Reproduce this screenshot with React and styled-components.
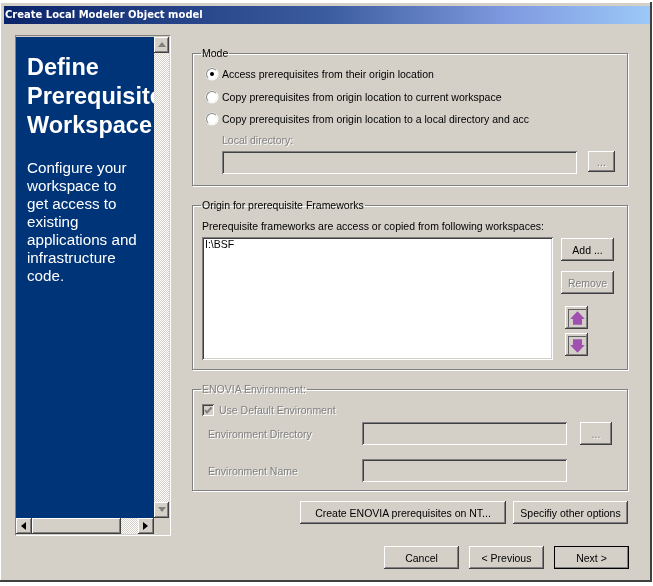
import React from 'react';
import styled, { createGlobalStyle } from 'styled-components';

const GlobalStyle = createGlobalStyle`
    html, body {
        margin: 0;
        padding: 0;
        background: #ffffff;
    }
    body {
        width: 653px;
        height: 586px;
        overflow: hidden;
        font-family: "Liberation Sans", Arial, sans-serif;
    }
`;

const raisedShadow = `
    box-shadow: inset -1px -1px 0 #404040, inset 1px 1px 0 #ffffff,
        inset -2px -2px 0 #808080, inset 2px 2px 0 #d4d0c8;
`;
const sunkenShadow = `
    box-shadow: inset 1px 1px 0 #808080, inset -1px -1px 0 #ffffff,
        inset 2px 2px 0 #404040, inset -2px -2px 0 #d4d0c8;
`;

const Dialog = styled.div`
    box-sizing: border-box;
    width: 652px;
    height: 580px;
    margin-top: 2px;
    padding: 4px 0 0 4px;
    background: #d4d0c8;
    border-right: 2px solid #404040;
    border-bottom: 2px solid #404040;
    box-shadow: inset 1px 1px 0 #ffffff;
    display: flex;
    flex-direction: column;
    filter: blur(0.3px);
`;
const TitleBar = styled.div`
    height: 18px;
    flex: none;
    padding-left: 1px;
    background: linear-gradient(
        90deg,
        #0a246a 0%,
        #3c5ca0 50%,
        #7f9ae0 78%,
        #9cc8f8 100%
    );
    color: #ffffff;
    font: bold 10px/18px "DejaVu Sans", Verdana, sans-serif;
    white-space: nowrap;
`;
const Body = styled.div`
    flex: 1;
    display: flex;
    padding: 11px 22px 0 11px;
    gap: 21px;
`;
const WizardPane = styled.div`
    box-sizing: border-box;
    width: 156px;
    height: 501px;
    flex: none;
    display: grid;
    grid-template-columns: 138px 15px;
    grid-template-rows: 481px 16px;
    padding: 1px 2px 2px 0;
    border: 1px solid #808080;
    border-right-color: #ffffff;
    border-bottom-color: #ffffff;
`;
const BluePanel = styled.div`
    overflow: hidden;
    background: #003478;
    color: #ffffff;
    padding: 16px 0 0 11px;
`;
const PanelTitle = styled.div`
    font-weight: bold;
    font-size: 23.5px;
    line-height: 29px;
    white-space: nowrap;
    margin-bottom: 19px;
`;
const PanelText = styled.div`
    font-size: 15.2px;
    line-height: 18px;
    width: 114px;
`;
const VScroll = styled.div`
    display: flex;
    flex-direction: column;
    justify-content: space-between;
    background: repeating-conic-gradient(#ffffff 0 25%, #d4d0c8 0 50%) 0 0 / 2px 2px;
`;
const HScroll = styled.div`
    display: flex;
    background: repeating-conic-gradient(#ffffff 0 25%, #d4d0c8 0 50%) 0 0 / 2px 2px;
`;
const ScrollBtn = styled.div`
    width: ${(p) => p.$width || 16}px;
    height: 16px;
    flex: none;
    background: #d4d0c8;
    display: flex;
    align-items: center;
    justify-content: center;
    ${raisedShadow}
`;
const ScrollThumb = styled.div`
    width: 89px;
    height: 16px;
    background: #d4d0c8;
    ${raisedShadow}
`;
const ScrollFill = styled.div`
    flex: 1;
`;
const Content = styled.div`
    width: 436px;
    padding-top: 12px;
    display: flex;
    flex-direction: column;
`;
const Group = styled.fieldset`
    box-sizing: border-box;
    height: ${(p) => p.$height}px;
    margin: 0 0 ${(p) => p.$gap || 0}px;
    padding: 0 12px 0 9px;
    min-width: 0;
    border: 1px solid #808080;
    box-shadow: 1px 1px 0 #ffffff, inset 1px 1px 0 #ffffff;
    color: #000000;
    font-size: 10.5px;
`;
const Legend = styled.legend`
    margin-left: -1px;
    padding: 0 1px;
    font-size: 10.5px;
    line-height: 13px;
    color: ${(p) => (p.$disabled ? '#808080' : '#000000')};
    text-shadow: ${(p) => (p.$disabled ? '1px 1px 0 #ffffff' : 'none')};
`;
const RadioList = styled.div`
    margin-top: 3px;
    padding-left: 4px;
`;
const RadioRow = styled.div`
    display: flex;
    align-items: center;
    height: 22.5px;
    gap: 4px;
    white-space: nowrap;
`;
const RadioDot = styled.span`
    box-sizing: border-box;
    width: 12px;
    height: 12px;
    flex: none;
    border-radius: 50%;
    background: #ffffff;
    border: 1px solid #808080;
    border-right-color: #f4f4f4;
    border-bottom-color: #f4f4f4;
    box-shadow: 0 0 0 0.5px #ffffff;
    display: flex;
    align-items: center;
    justify-content: center;
    &::after {
        content: '';
        width: 4px;
        height: 4px;
        border-radius: 50%;
        background: ${(p) => (p.$checked ? '#000000' : 'transparent')};
    }
`;
const DimLabel = styled.div`
    color: #808080;
    text-shadow: 1px 1px 0 #ffffff;
    line-height: 14px;
    white-space: nowrap;
`;
const LocalLabel = styled(DimLabel)`
    margin: 2.5px 0 0 20px;
`;
const LocalRow = styled.div`
    display: flex;
    align-items: flex-start;
    gap: 11px;
    margin: 4px 0 0 20px;
`;
const Field = styled.div`
    box-sizing: border-box;
    width: ${(p) => p.$width}px;
    height: 23px;
    background: #d4d0c8;
    flex: none;
    ${sunkenShadow}
`;
const Button = styled.div`
    box-sizing: border-box;
    width: ${(p) => p.$width}px;
    height: ${(p) => p.$height || 23}px;
    flex: none;
    display: flex;
    align-items: center;
    justify-content: center;
    background: #d4d0c8;
    color: ${(p) => (p.$disabled ? '#808080' : '#000000')};
    text-shadow: ${(p) => (p.$disabled ? '1px 1px 0 #ffffff' : 'none')};
    font-size: 10.5px;
    white-space: nowrap;
    outline: ${(p) => (p.$default ? '1px solid #000000' : 'none')};
    outline-offset: -1px;
    ${raisedShadow}
`;
const FrameworkText = styled.div`
    margin-top: 7px;
    line-height: 14px;
    white-space: nowrap;
`;
const ListRow = styled.div`
    display: flex;
    margin-top: 4px;
`;
const ListBox = styled.div`
    box-sizing: border-box;
    width: 351px;
    height: 123px;
    flex: none;
    background: #ffffff;
    padding: 1px 3px;
    line-height: 13px;
    ${sunkenShadow}
`;
const ListButtons = styled.div`
    display: flex;
    flex-direction: column;
    gap: 10px;
    margin-left: 8px;
    padding-top: 1px;
`;
const ArrowColumn = styled.div`
    display: flex;
    flex-direction: column;
    gap: 4px;
    margin: 2px 0 0 4px;
`;
const ArrowButton = styled(Button)`
    width: 23px;
    height: 23px;
`;
const ArrowIcon = styled.svg`
    width: 17px;
    height: 17px;
    border-top: 1px solid #606060;
    border-left: 1px solid #606060;
`;
const EnvRow = styled.div`
    display: flex;
    align-items: center;
    height: ${(p) => p.$height || 23}px;
    margin-top: ${(p) => p.$top}px;
    color: #808080;
`;
const EnvLabel = styled(DimLabel)`
    width: 160px;
    padding-left: 6px;
    box-sizing: content-box;
    margin-right: -6px;
`;
const CheckBox = styled.span`
    box-sizing: border-box;
    width: 12px;
    height: 12px;
    flex: none;
    margin-right: 5px;
    background: #d4d0c8;
    display: flex;
    ${sunkenShadow}
`;
const EnvBrowse = styled(Button)`
    margin-left: 13px;
`;
const ActionRow = styled.div`
    display: flex;
    justify-content: flex-end;
    gap: 7px;
    margin-top: 10px;
`;
const NavRow = styled.div`
    display: flex;
    justify-content: flex-end;
    gap: 10px;
    margin-top: 22px;
    margin-right: -1px;
`;

const Tri = ({ dir, color = '#000000' }) => {
    const points = {
        up: '4,1 8,6 0,6',
        down: '0,1 8,1 4,6',
        left: '6,0 6,8 1,4',
        right: '1,0 1,8 6,4',
    };
    return (
        <svg width="8" height="8" viewBox="0 0 8 8">
            <polygon points={points[dir]} fill={color} />
        </svg>
    );
};

const BigArrow = ({ down }) => (
    <ArrowIcon viewBox="0 0 15 15">
        <polygon
            points={
                down
                    ? '3.5,2 11.5,2 11.5,7 14,7 7.5,14 1,7 3.5,7'
                    : '7.5,1 14,8 11.5,8 11.5,13 3.5,13 3.5,8 1,8'
            }
            fill="#a050b0"
        />
    </ArrowIcon>
);

const App = () => {
    return (
        <>
            <GlobalStyle />
            <Dialog>
                <TitleBar>Create Local Modeler Object model</TitleBar>
                <Body>
                    <WizardPane>
                        <BluePanel>
                            <PanelTitle>
                                Define
                                <br />
                                Prerequisite
                                <br />
                                Workspace
                            </PanelTitle>
                            <PanelText>
                                Configure your workspace to get access to
                                existing applications and infrastructure code.
                            </PanelText>
                        </BluePanel>
                        <VScroll>
                            <ScrollBtn $width={15}>
                                <Tri dir="up" color="#808080" />
                            </ScrollBtn>
                            <ScrollBtn $width={15}>
                                <Tri dir="down" color="#808080" />
                            </ScrollBtn>
                        </VScroll>
                        <HScroll>
                            <ScrollBtn>
                                <Tri dir="left" />
                            </ScrollBtn>
                            <ScrollThumb />
                            <ScrollFill />
                            <ScrollBtn>
                                <Tri dir="right" />
                            </ScrollBtn>
                        </HScroll>
                    </WizardPane>
                    <Content>
                        <Group $height={139} $gap={13}>
                            <Legend>Mode</Legend>
                            <RadioList>
                                <RadioRow>
                                    <RadioDot $checked />
                                    Access prerequisites from their origin location
                                </RadioRow>
                                <RadioRow>
                                    <RadioDot />
                                    Copy prerequisites from origin location to
                                    current workspace
                                </RadioRow>
                                <RadioRow>
                                    <RadioDot />
                                    Copy prerequisites from origin location to a
                                    local directory and acc
                                </RadioRow>
                            </RadioList>
                            <LocalLabel>Local directory:</LocalLabel>
                            <LocalRow>
                                <Field $width={355} />
                                <Button $width={27} $height={21} $disabled>
                                    ...
                                </Button>
                            </LocalRow>
                        </Group>
                        <Group $height={171} $gap={13}>
                            <Legend>Origin for prerequisite Frameworks</Legend>
                            <FrameworkText>
                                Prerequisite frameworks are access or copied
                                from following workspaces:
                            </FrameworkText>
                            <ListRow>
                                <ListBox>I:\BSF</ListBox>
                                <ListButtons>
                                    <Button $width={53}>Add ...</Button>
                                    <Button $width={53} $disabled>
                                        Remove
                                    </Button>
                                    <ArrowColumn>
                                        <ArrowButton>
                                            <BigArrow />
                                        </ArrowButton>
                                        <ArrowButton>
                                            <BigArrow down />
                                        </ArrowButton>
                                    </ArrowColumn>
                                </ListButtons>
                            </ListRow>
                        </Group>
                        <Group $height={108}>
                            <Legend $disabled>ENOVIA Environment:</Legend>
                            <EnvRow $height={16} $top={6}>
                                <CheckBox>
                                    <svg width="12" height="12" viewBox="0 0 12 12">
                                        <path
                                            d="M3 6l2 2.5L9.5 3.5"
                                            stroke="#808080"
                                            strokeWidth="2"
                                            fill="none"
                                        />
                                    </svg>
                                </CheckBox>
                                <DimLabel>Use Default Environment</DimLabel>
                            </EnvRow>
                            <EnvRow $top={4}>
                                <EnvLabel>Environment Directory</EnvLabel>
                                <Field $width={205} />
                                <EnvBrowse $width={32} $disabled>
                                    ...
                                </EnvBrowse>
                            </EnvRow>
                            <EnvRow $top={14}>
                                <EnvLabel>Environment Name</EnvLabel>
                                <Field $width={205} />
                            </EnvRow>
                        </Group>
                        <ActionRow>
                            <Button $width={206}>
                                Create ENOVIA prerequisites on NT...
                            </Button>
                            <Button $width={115}>Specifiy other options</Button>
                        </ActionRow>
                        <NavRow>
                            <Button $width={75}>Cancel</Button>
                            <Button $width={75}>&lt; Previous</Button>
                            <Button $width={75} $default>
                                Next &gt;
                            </Button>
                        </NavRow>
                    </Content>
                </Body>
            </Dialog>
        </>
    );
};

export default App;
